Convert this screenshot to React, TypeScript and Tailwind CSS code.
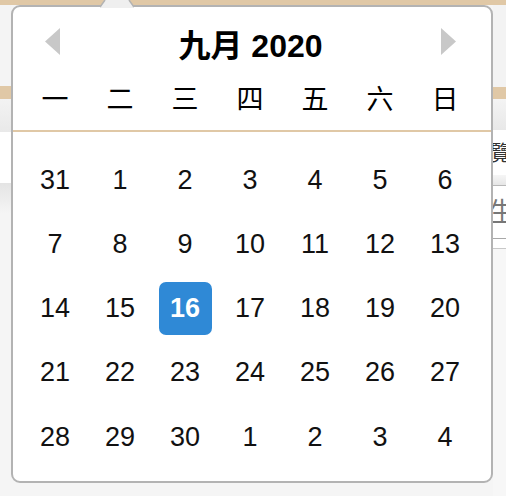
import React from "react";

const weekdays = ["一", "二", "三", "四", "五", "六", "日"];
const days = [
  31, 1, 2, 3, 4, 5, 6,
  7, 8, 9, 10, 11, 12, 13,
  14, 15, 16, 17, 18, 19, 20,
  21, 22, 23, 24, 25, 26, 27,
  28, 29, 30, 1, 2, 3, 4,
];

const font = { fontFamily: "'Liberation Sans', 'Noto Sans CJK TC', Arial, sans-serif" };

function LeftStrip() {
  return (
    <div className="flex w-[11px] flex-col bg-[#f5f5f5]">
      <div className="h-[5px] bg-[#e0c8a6]" />
      <div className="h-[81px] bg-[#f4f4f4]" />
      <div className="h-[13px] bg-[#e0c8a6]" />
      <div className="h-[33px] bg-gradient-to-b from-[#f3f3f3] to-[#e9e9e9]" />
      <div className="h-[51px] bg-white" />
      <div className="h-[30px] bg-gradient-to-b from-[#e4e4e4] to-[#f5f5f5]" />
      <div className="flex-1 bg-[#f5f5f5]" />
    </div>
  );
}

function RightStrip() {
  return (
    <div className="flex w-[13px] flex-col overflow-hidden bg-[#f7f7f7]" style={font}>
      <div className="h-[5px] bg-[#e0c8a6]" />
      <div className="h-[82px] bg-[#f3f3f3]" />
      <div className="h-[12px] bg-[#e0c8a6]" />
      <div className="h-[31px] bg-gradient-to-b from-[#f4f4f4] to-[#e8e8e8]" />
      <div className="flex h-[45px] items-center overflow-hidden bg-white">
        <span className="ml-[-3px] whitespace-nowrap text-[21px] leading-none text-[#333]">覽</span>
      </div>
      <div className="h-[10px] bg-gradient-to-b from-[#f6f6f6] to-[#e6e6e6]" />
      <div className="h-px bg-[#b8b8b8]" />
      <div className="flex h-[52px] items-center overflow-hidden bg-white">
        <span className="ml-[-4px] whitespace-nowrap text-[26px] leading-none text-[#777]">生</span>
      </div>
      <div className="h-px bg-[#a8a8a8]" />
      <div className="h-[9px] bg-white" />
      <div className="h-px bg-[#c8c8c8]" />
      <div className="flex-1 bg-[#f7f7f7]" />
    </div>
  );
}

function Arrow({ dir }: { dir: "left" | "right" }) {
  return (
    <svg width="15" height="27" viewBox="0 0 15 27" className="mt-[6px] shrink-0">
      {dir === "left" ? (
        <polygon points="15,0 15,27 0,13.5" fill="#c8c8c8" />
      ) : (
        <polygon points="0,0 0,27 15,13.5" fill="#c8c8c8" />
      )}
    </svg>
  );
}

export default function App() {
  return (
    <div className="relative h-[496px] w-[506px] overflow-hidden bg-[#f5f5f5]" style={font}>
      <div className="flex h-full">
        <LeftStrip />
        <div className="flex flex-1 flex-col">
          <div className="h-[5px] bg-[#e0c8a6]" />
          <div className="flex-1 bg-[#f5f5f5]" />
        </div>
        <RightStrip />
      </div>

      <div className="absolute left-[11px] top-[5px] h-[478px] w-[482px] rounded-[9px] border-2 border-[#b3b3b3] bg-white">
        <div className="border-b-2 border-[#e0c8a6] pb-[6px] pt-[15px]">
          <div className="flex h-[48px] items-start pl-[32px] pr-[35px]">
            <Arrow dir="left" />
            <div className="flex h-[48px] flex-1 items-center justify-center text-[32px] font-bold leading-none text-black">
              九月 2020
            </div>
            <Arrow dir="right" />
          </div>
          <div className="ml-[9.5px] mt-[6px] grid h-[48px] w-[455px] grid-cols-7">
            {weekdays.map((w) => (
              <div key={w} className="flex items-center justify-center text-[27px] leading-none text-black">
                {w}
              </div>
            ))}
          </div>
        </div>
        <div className="ml-[9.5px] grid w-[455px] grid-cols-7 pt-[16px]">
          {days.map((d, i) => (
            <div key={i} className="flex h-[64.25px] items-center justify-center">
              {i === 16 ? (
                <div className="flex h-[53px] w-[53px] items-center justify-center rounded-[7px] bg-[#2f89d6] text-[27px] font-bold leading-none text-white">
                  {d}
                </div>
              ) : (
                <span className="text-[27px] leading-none text-[#111]">{d}</span>
              )}
            </div>
          ))}
        </div>
      </div>

      <svg className="absolute left-[100px] top-0" width="34" height="8" viewBox="0 0 34 8">
        <polygon points="0,8 5,0 29,0 34,8" fill="#efefef" />
        <line x1="0" y1="7" x2="5" y2="0" stroke="#b3b3b3" strokeWidth="1.5" />
        <line x1="34" y1="7" x2="29" y2="0" stroke="#b3b3b3" strokeWidth="1.5" />
      </svg>
    </div>
  );
}
